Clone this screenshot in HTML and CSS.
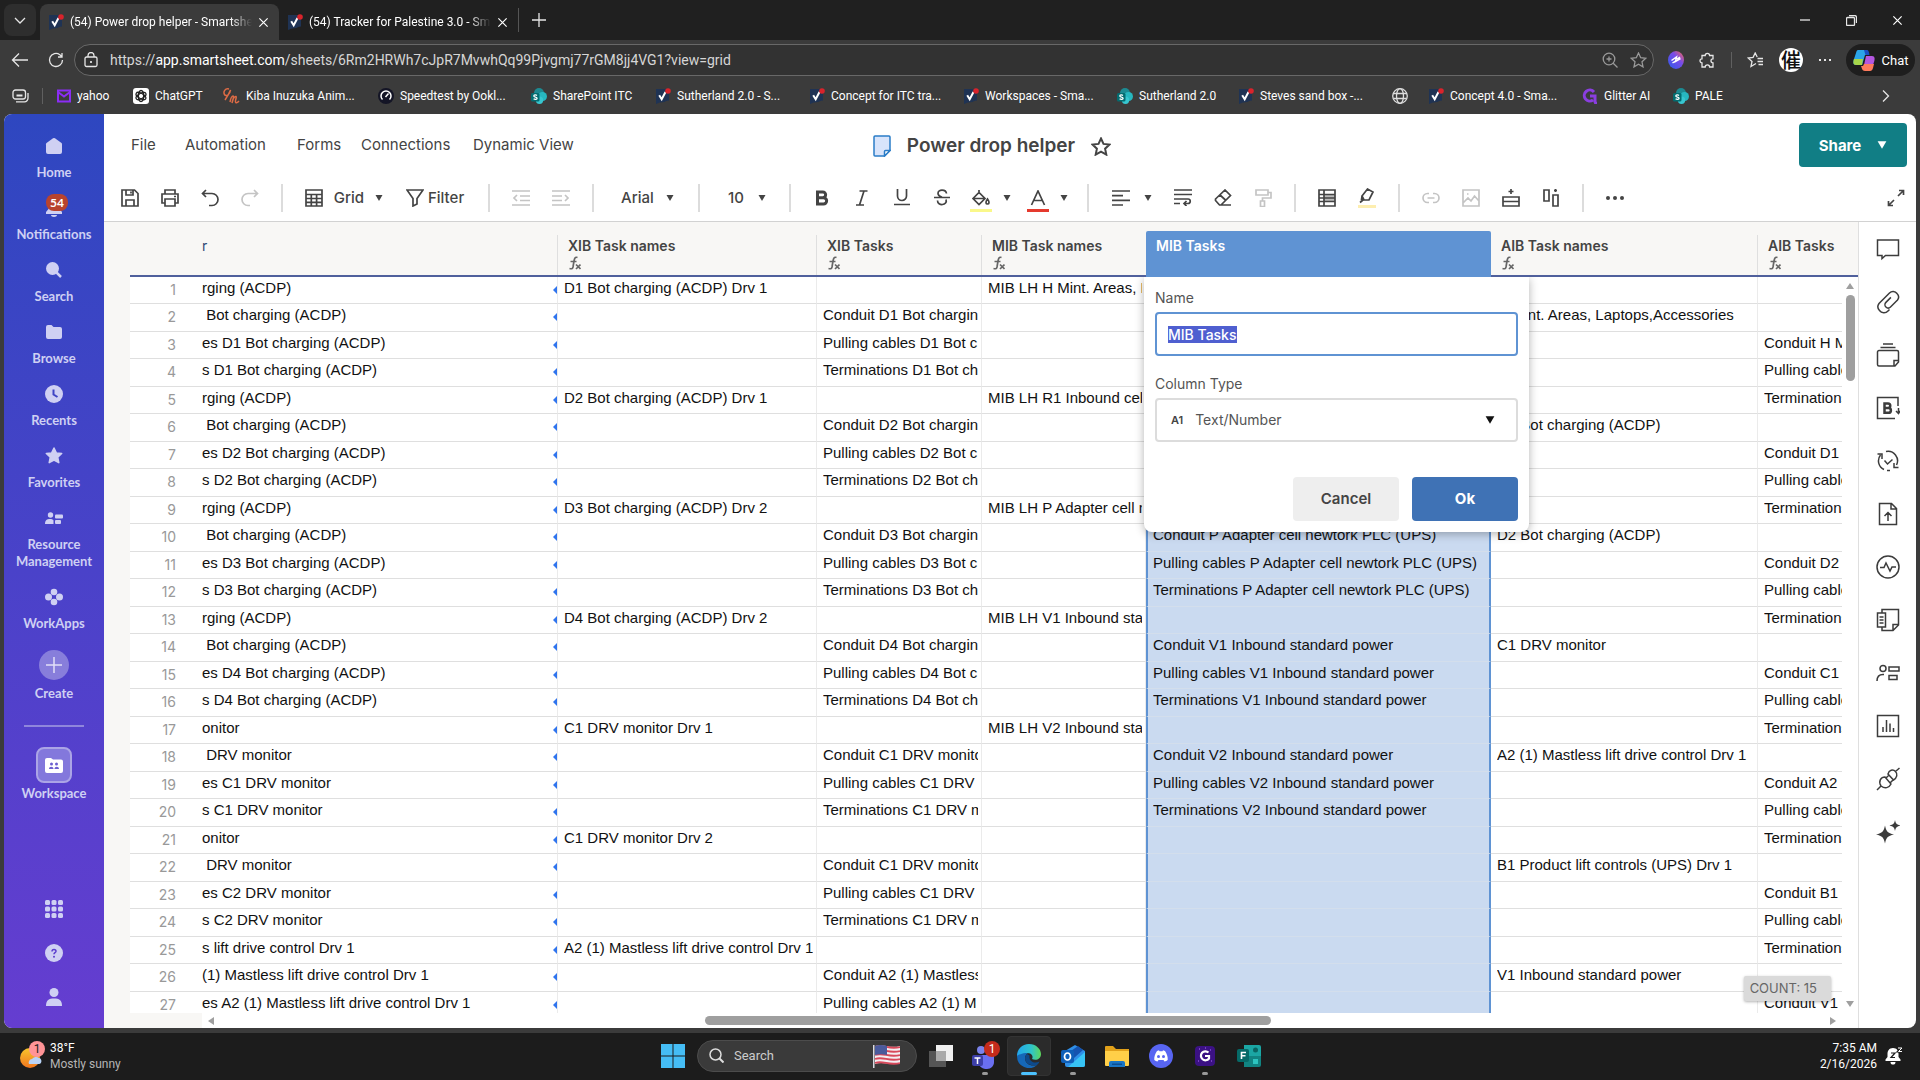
FILE: index.html
```html
<!DOCTYPE html>
<html lang="en">
<head>
    <meta charset="UTF-8">
    <meta name="viewport" content="width=device-width, initial-scale=1.0">
    <title>Power drop helper - Smartsheet</title>
    <link rel="stylesheet" href="styles.css">
</head>
<body>
    <!-- shared symbols -->
    <svg class="symbols" aria-hidden="true">
        <symbol id="smartsheet" viewBox="0 0 16 16">
            <path fill="#1f3354" d="M1 1h13v11.500c-3 .2-3.500 1.500-6.500 1.700C4.500 14.400 3 15 1 16z"/>
            <path fill="none" stroke="#fff" stroke-width="2" d="M4.200 7.200l2.500 4L10.500 4"/>
            <circle cx="13" cy="3" r="2.800" fill="#d9232b"/>
        </symbol>
        <symbol id="sharepoint" viewBox="0 0 16 16">
            <circle cx="8" cy="5" r="5" fill="#1d8a92"/>
            <circle cx="11.500" cy="8.500" r="4.500" fill="#27b7c0"/>
            <circle cx="8.500" cy="12.300" r="3.700" fill="#37c6d0"/>
            <rect y="5" width="8.500" height="8.500" rx="1.500" fill="#036c70"/>
            <path fill="none" stroke="#fff" stroke-width="1.300" d="M6 7.400c-1-.8-3.200-.7-3.200.5 0 1.400 3.300.9 3.300 2.400 0 1.400-2.400 1.400-3.500.5"/>
        </symbol>
        <symbol id="close" viewBox="0 0 12 12">
            <path fill="none" stroke="currentColor" stroke-width="1.300" d="M1.500 1.500l9 9m0-9l-9 9"/>
        </symbol>
        <symbol id="caret" viewBox="0 0 8 6">
            <path fill="currentColor" d="M.5 0h7L4 6z"/>
        </symbol>
        <symbol id="fx" viewBox="0 0 12 14">
            <path fill="none" stroke="#666" stroke-width="1.700" d="M8.500 1.500C6 .5 5.500 2.500 5 5L4 11c-.4 2-1.500 2-3.500 1.500M1.500 5.500h6"/>
            <path fill="none" stroke="#666" stroke-width="1.700" d="M7 8.500l4.500 4.500M11.500 8.500L7 13"/>
        </symbol>
    </svg>

    <header class="browser">
        <div class="tabs">
            <button class="tab-menu" aria-label="Tab actions"><svg width="14" height="14" viewBox="0 0 14 14"><path d="M2 5l5 5 5-5"/></svg></button>
            <div class="tab active">
                <svg width="16" height="16"><use href="#smartsheet"/></svg>
                <span class="tab-title">(54) Power drop helper - Smartshe</span>
                <button aria-label="Close tab"><svg width="11" height="11"><use href="#close"/></svg></button>
            </div>
            <div class="tab">
                <svg width="16" height="16"><use href="#smartsheet"/></svg>
                <span class="tab-title">(54) Tracker for Palestine 3.0 - Sma</span>
                <button aria-label="Close tab"><svg width="11" height="11"><use href="#close"/></svg></button>
            </div>
            <button class="new-tab" aria-label="New tab"><svg width="16" height="16" viewBox="0 0 16 16"><path d="M8 1v14M1 8h14"/></svg></button>
            <div class="window-buttons">
                <button aria-label="Minimize"><svg width="10" height="10" viewBox="0 0 10 10"><path d="M0 5h10"/></svg></button>
                <button aria-label="Restore"><svg width="11" height="11" viewBox="0 0 11 11"><path d="M.5 3.500a1 1 0 0 1 1-1h6a1 1 0 0 1 1 1v6a1 1 0 0 1-1 1h-6a1 1 0 0 1-1-1zM3 .5h5.500a2 2 0 0 1 2 2V8"/></svg></button>
                <button aria-label="Close"><svg width="11" height="11"><use href="#close"/></svg></button>
            </div>
        </div>

        <div class="address-row">
            <button class="nav-button" aria-label="Back"><svg width="18" height="16" viewBox="0 0 18 16"><path d="M17 8H1.500M8 1.500L1.500 8 8 14.500"/></svg></button>
            <button class="nav-button" aria-label="Refresh"><svg width="16" height="16" viewBox="0 0 16 16"><path d="M14.500 8A6.500 6.500 0 1 1 11.800 2.700L14 4.500M14 1v4h-4"/></svg></button>
            <div class="address">
                <svg width="14" height="16" viewBox="0 0 14 16"><rect x="1" y="5" width="12" height="9.500" rx="1.500"/><path d="M4 5V3.500a3 3 0 0 1 6 0V5"/><circle cx="7" cy="10" r="1" fill="#fff" stroke="none"/></svg>
                <span class="url">https://<b>app.smartsheet.com</b>/sheets/6Rm2HRWh7cJpR7MvwhQq99Pjvgmj77rGM8jj4VG1?view=grid</span>
                <svg class="dim" width="16" height="16" viewBox="0 0 16 16"><circle cx="7" cy="7" r="5.800"/><path d="M11.200 11.200L15.500 15.500M7 4.500v5M4.500 7h5"/></svg>
                <svg class="dim" width="17" height="16" viewBox="0 0 17 16"><path d="M8.500 1l2.200 4.700 5.100.6-3.800 3.500 1 5.100-4.500-2.600L4 14.900l1-5.100L1.200 6.300l5.100-.6z"/></svg>
            </div>
            <div class="extensions">
                <svg width="16" height="18" viewBox="0 0 16 18"><defs><linearGradient id="lg1" x1="0" y1="1" x2="1" y2="0"><stop offset="0" stop-color="#2c5be8"/><stop offset=".6" stop-color="#7a4be8"/><stop offset="1" stop-color="#ff6a4d"/></linearGradient></defs><ellipse class="disc" cx="8" cy="9" rx="8" ry="9" fill="url(#lg1)"/><path d="M3.500 9.500l5-3.500-1 4.500 5-3M4.500 12l3-2M9 8l3-2" stroke="#fff" stroke-width="1.500"/></svg>
                <svg width="17" height="17" viewBox="0 0 17 17"><path d="M3 3.500h3.200a2.200 2.200 0 0 1 4.400 0H14v3.300a2 2 0 0 0 0 4V15h-3.400a2.200 2.200 0 0 0-4.400 0H3v-4.200a2 2 0 0 1 0-4z"/></svg>
                <i class="vline"></i>
                <svg width="17" height="16" viewBox="0 0 17 16"><path d="M9 11.500L4 14.500l1-5L1.200 6l4.900-.6L8.200 1l2 4M10.500 6.500H16M10.500 9.500H16M11.500 12.500H16"/></svg>
                <span class="avatar">催</span>
                <svg width="14" height="4" viewBox="0 0 14 4"><path d="M1 2h2M6 2h2M11 2h2" stroke-width="2"/></svg>
            </div>
            <button class="chat">
                <svg width="22" height="21" viewBox="0 0 22 21"><g class="logo"><path fill="#2ba5e8" d="M5 0h8l2 5h-3L9 15H3C0 15 0 12 1 9l2-6C3.500 1 4 0 5 0z"/><path fill="#a6d64a" d="M1 9h9l-1 6H3C0 15 0 12 1 9z"/><path fill="#1a4fc4" d="M11 0h3c1.500 0 2 2 2.500 5h-4z"/><path fill="#b457e0" d="M13 6h6c3 0 3 3 2 6l-1 3h-9z"/><path fill="#ff7a5c" d="M11 14h10l-1 4c-.5 2-1.500 3-3 3h-5c-3 0-3-3-4-5h2z"/></g></svg>
                Chat
            </button>
        </div>

        <nav class="bookmarks">
            <button class="nav-button" aria-label="Workspaces"><svg width="17" height="14" viewBox="0 0 17 14"><rect x="1" y="1" width="12.500" height="9" rx="2.500"/><path d="M4.500 6.500h6" stroke-width="2"/><path d="M4 12.800h8.500a3.500 3.500 0 0 0 3.500-3.500V4"/></svg></button>
            <i class="vline"></i>
            <div class="bookmark-list">
                <a href="#"><svg width="14" height="14" viewBox="0 0 14 14"><path d="M1 1.500h12v11H1zM1 3l6 4.500L13 3" fill="none" stroke="#8b2df5" stroke-width="2"/></svg>yahoo</a>
                <a href="#"><svg width="16" height="16" viewBox="0 0 16 16"><rect width="16" height="16" rx="3" fill="#fff"/><g fill="none" stroke="#222"><ellipse cx="8" cy="8" rx="2.600" ry="5.500"/><ellipse cx="8" cy="8" rx="2.600" ry="5.500" transform="rotate(60 8 8)"/><ellipse cx="8" cy="8" rx="2.600" ry="5.500" transform="rotate(120 8 8)"/></g></svg>ChatGPT</a>
                <a href="#"><svg width="17" height="16" viewBox="0 0 17 16"><path d="M6 1C2 0 0 4 1.500 6.500S7 7 7.500 2C6 6 4 9 2 12M7 14c1-5 2-6 3-6s0 4-1 7c1-5 3-7 4-6.500s-1 4-.5 5.500 2 .5 3.500-1" fill="none" stroke="#dd6b45" stroke-width="1.500"/></svg>Kiba Inuzuka Anim...</a>
                <a href="#"><svg width="16" height="16" viewBox="0 0 16 16"><circle cx="8" cy="8" r="8" fill="#141526"/><path d="M4.500 11.500a5 5 0 1 1 7 0M7.500 9L10.500 5.500" fill="none" stroke="#fff" stroke-width="1.500"/></svg>Speedtest by Ookl...</a>
                <a href="#"><svg width="16" height="16"><use href="#sharepoint"/></svg>SharePoint ITC</a>
                <a href="#"><svg width="16" height="16"><use href="#smartsheet"/></svg>Sutherland 2.0 - S...</a>
                <a href="#"><svg width="16" height="16"><use href="#smartsheet"/></svg>Concept for ITC tra...</a>
                <a href="#"><svg width="16" height="16"><use href="#smartsheet"/></svg>Workspaces - Sma...</a>
                <a href="#"><svg width="16" height="16"><use href="#sharepoint"/></svg>Sutherland 2.0</a>
                <a href="#"><svg width="16" height="16"><use href="#smartsheet"/></svg>Steves sand box -...</a>
                <a href="#" aria-label="Site"><svg width="16" height="16" viewBox="0 0 16 16"><g class="globe"><circle cx="8" cy="8" r="7.300"/><ellipse cx="8" cy="8" rx="3.500" ry="7.300"/><path d="M1.500 5.500h13M1.500 10.500h13"/></g></svg></a>
                <a href="#"><svg width="16" height="16"><use href="#smartsheet"/></svg>Concept 4.0 - Sma...</a>
                <a href="#"><svg width="16" height="16" viewBox="0 0 16 16"><path d="M12 4A5.500 5.500 0 1 0 11 12M8 8h5v5c0 2 1 2.500 2 2.500" fill="none" stroke="#8a3ee0" stroke-width="3"/></svg>Glitter AI</a>
                <a href="#"><svg width="16" height="16"><use href="#sharepoint"/></svg>PALE</a>
            </div>
            <button class="nav-button more" aria-label="More bookmarks"><svg width="8" height="14" viewBox="0 0 8 14"><path d="M1 1.500L6.500 7 1 12.500"/></svg></button>
        </nav>
    </header>

    <div class="app">
        <nav class="sidebar">
            <a href="#"><svg width="18" height="18" viewBox="0 0 18 18"><path d="M8 1.300a2 2 0 0 1 2 0L16.500 6c.4.400.5.700.5 1.200V15a2 2 0 0 1-2 2H3a2 2 0 0 1-2-2V7.200c0-.5.1-.8.5-1.200z"/></svg>Home</a>
            <a href="#" class="notifications"><svg width="18" height="18" viewBox="0 0 18 18"><path d="M9 0c4 0 5.500 3 5.500 6v4l2.500 3v2H1v-2l2.500-3V6C3.500 3 5 0 9 0zM6 16h6c0 1.300-1.300 2-3 2s-3-.7-3-2z"/></svg><span class="badge">54</span>Notifications</a>
            <a href="#"><svg width="18" height="18" viewBox="0 0 18 18"><circle cx="7.500" cy="7.500" r="6.500"/><path d="M11 11l5 5" stroke="#cfd0f3" stroke-width="2.500"/></svg>Search</a>
            <a href="#"><svg width="18" height="18" viewBox="0 0 18 18"><path d="M1 4a2 2 0 0 1 2-2h3.500l2 2H15a2 2 0 0 1 2 2v8a2 2 0 0 1-2 2H3a2 2 0 0 1-2-2z"/></svg>Browse</a>
            <a href="#"><svg width="18" height="18" viewBox="0 0 18 18"><circle cx="9" cy="9" r="9"/><path d="M8.500 4.500v5l4 2.500" fill="none" stroke="#3f44c4" stroke-width="2"/></svg>Recents</a>
            <a href="#"><svg width="18" height="18" viewBox="0 0 18 18"><path stroke="#cfd0f3" stroke-linejoin="round" stroke-width="1.500" d="M9 1l2.300 4.900 5.400.6-4 3.700 1.100 5.500L9 13l-4.800 2.700 1.100-5.500-4-3.700 5.400-.6z"/></svg>Favorites</a>
            <a href="#"><svg width="18" height="18" viewBox="0 0 18 18"><circle cx="5.500" cy="6" r="2.700"/><path d="M0 15c0-4 2-5 5-5 2 0 3 .5 3.500 1.500V15z"/><rect x="10" y="5.500" width="8" height="4" rx="1"/><rect x="10" y="11" width="6" height="4" rx="1"/></svg>Resource<br>Management</a>
            <a href="#"><svg width="18" height="18" viewBox="0 0 18 18"><circle cx="9" cy="4" r="3.300"/><circle cx="9" cy="14" r="3.300"/><circle cx="3.500" cy="9" r="3.500"/><circle cx="14.500" cy="9" r="3.500"/></svg>WorkApps</a>
            <a href="#" class="create"><span class="plus"><svg width="16" height="16" viewBox="0 0 16 16"><path d="M8 0v16M0 8h16" stroke="#e2e0f8" stroke-width="1.500"/></svg></span>Create</a>
            <hr>
            <a href="#" class="workspace"><span class="tile"><svg width="18" height="15" viewBox="0 0 18 15"><path fill="#fff" d="M0 2a2 2 0 0 1 2-2h4l2 1.500h8a2 2 0 0 1 2 2V13a2 2 0 0 1-2 2H2a2 2 0 0 1-2-2z"/><g fill="#6c5fd0"><circle cx="6.500" cy="6" r="1.500"/><circle cx="11.500" cy="6" r="1.500"/><path d="M4 11c0-3 4.500-3 4.500 0zM9.500 11c0-3 4.500-3 4.500 0z"/></g></svg></span>Workspace</a>
            <div class="sidebar-bottom">
                <button aria-label="Apps"><svg width="18" height="18" viewBox="0 0 18 18"><g><rect width="5" height="5" rx="1.500"/><rect x="6.500" width="5" height="5" rx="1.500"/><rect x="13" width="5" height="5" rx="1.500"/><rect y="6.500" width="5" height="5" rx="1.500"/><rect x="6.500" y="6.500" width="5" height="5" rx="1.500"/><rect x="13" y="6.500" width="5" height="5" rx="1.500"/><rect y="13" width="5" height="5" rx="1.500"/><rect x="6.500" y="13" width="5" height="5" rx="1.500"/><rect x="13" y="13" width="5" height="5" rx="1.500"/></g></svg></button>
                <button aria-label="Help"><svg width="18" height="18" viewBox="0 0 18 18"><circle cx="9" cy="9" r="9"/><path d="M7 7.500c0-3 4-2.500 4-.3 0 1.500-2 1.500-2 3" fill="none" stroke="#5c3fce" stroke-width="1.500"/><circle cx="9" cy="12.700" r="1" fill="#5c3fce"/></svg></button>
                <button aria-label="Account"><svg width="18" height="18" viewBox="0 0 18 18"><circle cx="9" cy="4.500" r="4.500"/><path d="M1 18c0-6 3-7.500 8-7.500s8 1.500 8 7.500z"/></svg></button>
            </div>
        </nav>

        <main class="main">
            <div class="title-bar">
                <div class="menu">
                    <button>File</button>
                    <button>Automation</button>
                    <button>Forms</button>
                    <button>Connections</button>
                    <button>Dynamic View</button>
                </div>
                <div class="sheet-title">
                    <svg width="18" height="22" viewBox="0 0 18 22"><path d="M2 1h14a1 1 0 0 1 1 1v13.500L11.500 21H2a1 1 0 0 1-1-1V2a1 1 0 0 1 1-1z" fill="#d8e4fb" stroke="#2a7cc7" stroke-width="1.500"/><path d="M17 15.500h-4.500a1 1 0 0 0-1 1V21z" fill="#fff" stroke="#2a7cc7" stroke-width="1.500"/></svg>
                    <h1>Power drop helper</h1>
                    <button aria-label="Add to favorites"><svg width="20" height="19" viewBox="0 0 20 19"><path d="M10 1.500l2.500 5.400 6 .7-4.400 4.100 1.200 5.900L10 14.600l-5.300 3 1.200-5.900L1.500 7.600l6-.7z" fill="none" stroke="#444" stroke-width="2"/></svg></button>
                </div>
                <button class="share">Share <svg width="10" height="8"><use href="#caret"/></svg></button>
            </div>

            <div class="toolbar">
                <button aria-label="Save"><svg width="18" height="18" viewBox="0 0 18 18"><path d="M1 1h12.500L17 4.500V17H1zM5 1v5h7V1M5 17v-6h8v6M10 2.500v2"/></svg></button>
                <button aria-label="Print"><svg width="18" height="18" viewBox="0 0 18 18"><path d="M4 5V1h10v4M4 14H1V5h16v9h-3M4 10h10v7H4zM13 7.500h2"/></svg></button>
                <button aria-label="Undo"><svg width="18" height="18" viewBox="0 0 18 18"><path d="M5 1L1.500 4.500 5 8M1.500 4.500H11a6 6 0 0 1 0 12H8"/></svg></button>
                <button aria-label="Redo" class="off"><svg width="18" height="18" viewBox="0 0 18 18"><path d="M13 1l3.500 3.500L13 8M16.500 4.500H7a6 6 0 0 0 0 12h2"/></svg></button>
                <i class="sep"></i>
                <button class="view"><svg width="18" height="18" viewBox="0 0 18 18"><path d="M1 1h16v16H1zM1 5.500h16M1 9.500h16M1 13.300h16M6.300 5.500V17M11.600 5.500V17"/></svg>Grid<svg class="caret" width="8" height="6"><use href="#caret"/></svg></button>
                <button class="filter"><svg width="18" height="18" viewBox="0 0 18 18"><path d="M1 1h16l-6 8.500V15l-4 2V9.500z"/></svg>Filter</button>
                <i class="sep"></i>
                <button aria-label="Outdent" class="off"><svg width="18" height="16" viewBox="0 0 18 16"><path d="M0 1h18M0 15h18M8 6h10M8 10.500h10M5 5L2 8l3 3"/></svg></button>
                <button aria-label="Indent" class="off"><svg width="18" height="16" viewBox="0 0 18 16"><path d="M0 1h18M0 15h18M0 6h10M0 10.500h10M13 5l3 3-3 3"/></svg></button>
                <i class="sep"></i>
                <button class="font">Arial<svg class="caret" width="8" height="6"><use href="#caret"/></svg></button>
                <i class="sep"></i>
                <button class="size">10<svg class="caret" width="8" height="6"><use href="#caret"/></svg></button>
                <i class="sep"></i>
                <button aria-label="Bold"><svg width="14" height="16" viewBox="0 0 14 16"><path class="heavy" d="M2.500 2h5.300a2.800 2.800 0 0 1 0 5.700H2.500zM2.500 7.700h6a3.100 3.100 0 0 1 0 6.300h-6z"/></svg></button>
                <button aria-label="Italic"><svg width="14" height="16" viewBox="0 0 14 16"><path d="M4.500 1h8M1 15h8M9 1L4.500 15"/></svg></button>
                <button aria-label="Underline"><svg width="16" height="17" viewBox="0 0 16 17"><path d="M3.500 0v7a4.500 4.500 0 0 0 9 0V0M0 15.500h16"/></svg></button>
                <button aria-label="Strikethrough"><svg width="16" height="17" viewBox="0 0 16 17"><path d="M12.500 4.500C12 0 4 0 4 4.200 4 7 6 7.500 8 8.200M0 8.500h16M12 10.500c2 6-8.500 7-8.500 1"/></svg></button>
                <button class="color" aria-label="Fill color"><svg width="22" height="22" viewBox="0 0 22 22"><path d="M3 8.500l6-6 6 6-6 6zM3 8.500h12M9 2.500V0M17.500 9c2.500 3.500 1.500 5 0 5s-2.500-1.500 0-5z"/><path d="M0 20.500h22" class="swatch-fill"/></svg><svg class="caret" width="8" height="6"><use href="#caret"/></svg></button>
                <button class="color" aria-label="Text color"><svg width="22" height="22" viewBox="0 0 22 22"><path d="M4.500 15L11 1l6.500 14M7 10.500h8"/><path d="M0 20.500h22" class="swatch-text"/></svg><svg class="caret" width="8" height="6"><use href="#caret"/></svg></button>
                <i class="sep"></i>
                <button class="align" aria-label="Align"><svg width="18" height="16" viewBox="0 0 18 16"><path d="M0 1h18M0 5.700h11M0 10.300h18M0 15h11"/></svg><svg class="caret" width="8" height="6"><use href="#caret"/></svg></button>
                <button aria-label="Wrap text"><svg width="18" height="17" viewBox="0 0 18 17"><path d="M0 1h18M0 5.500h18M0 10h14a2.200 2.200 0 0 1 0 4.500h-4M0 14.500h6M12.500 12L10 14.500l2.500 2.500"/></svg></button>
                <button aria-label="Clear format"><svg width="18" height="17" viewBox="0 0 18 17"><path d="M1.500 10L11 1l5.500 5.500L7 16H5.500l-4-4.500zM6 6l6 5.500M6 16h11"/></svg></button>
                <button aria-label="Format painter" class="off"><svg width="18" height="18" viewBox="0 0 18 18"><path d="M2 1h12v5H2zM14 3.500h3V9H8.500v3M6.500 12h4v5.500h-4z"/></svg></button>
                <i class="sep"></i>
                <button aria-label="Conditional formatting"><svg width="18" height="18" viewBox="0 0 18 18"><path d="M6 5.500h11v7H6z" fill="#bbb" stroke="none"/><path d="M1 1h16v16H1zM1 5.500h16M1 9h16M1 12.500h16M6 1v16"/></svg></button>
                <button aria-label="Highlight changes"><svg width="18" height="20" viewBox="0 0 18 20"><path d="M4 8l5.500-7L15 4l-4 8H6zM4 8l-.5 3.500L6 12M2 14.500l3-2.500"/><path d="M0 18.500h18" class="swatch-mark"/></svg></button>
                <i class="sep"></i>
                <button aria-label="Link" class="off"><svg width="18" height="12" viewBox="0 0 18 12"><path d="M7 1.500H5.500a4.500 4.500 0 0 0 0 9H7M11 1.500h1.500a4.500 4.500 0 0 1 0 9H11M5.500 6h7"/></svg></button>
                <button aria-label="Image" class="off"><svg width="18" height="18" viewBox="0 0 18 18"><path d="M1 1h16v16H1zM1.500 13.500L6 9l3 3 3.500-5 4.500 5M5 5h1.500"/></svg></button>
                <button aria-label="Insert row"><svg width="18" height="18" viewBox="0 0 18 18"><path d="M1 8h16v9H1zM1 12.500h16M9 0v5M6.500 2.500h5"/></svg></button>
                <button aria-label="Insert column"><svg width="18" height="18" viewBox="0 0 18 18"><path d="M2 1h5v11H2zM11 6h5v11h-5zM13.500 0v3M12 1.500h3"/></svg></button>
                <i class="sep"></i>
                <button aria-label="More"><svg width="18" height="4" viewBox="0 0 18 4"><g fill="#444" stroke="none"><circle cx="2" cy="2" r="2"/><circle cx="9" cy="2" r="2"/><circle cx="16" cy="2" r="2"/></g></svg></button>
                <button class="expand" aria-label="Full screen"><svg width="18" height="18" viewBox="0 0 18 18"><path d="M11 7l5.500-5.500M12 1.500h4.500V6M7 11l-5.500 5.500M1.500 12v4.500H6"/></svg></button>
            </div>

            <div class="content">
                <section class="sheet">
                    <div class="grid-area">
                        <div class="grid-wrap">
                            <table class="grid">
                                <colgroup>
                                    <col class="c-num"><col class="c-task"><col class="c-xib-names"><col class="c-xib"><col class="c-mib-names"><col class="c-mib"><col class="c-aib-names"><col>
                                </colgroup>
                                <thead>
                                    <tr>
                                        <th aria-label="Row"></th>
                                        <th class="primary"><div class="head">r</div></th>
                                        <th><div class="head">XIB Task names<svg width="12" height="14"><use href="#fx"/></svg></div></th>
                                        <th><div class="head">XIB Tasks<svg width="12" height="14"><use href="#fx"/></svg></div></th>
                                        <th><div class="head last">MIB Task names<svg width="12" height="14"><use href="#fx"/></svg></div></th>
                                        <th class="selected">
                                            <div class="head">MIB Tasks</div>
                                            <form class="column-dialog" id="columnDialog">
                                                <label for="columnName">Name</label>
                                                <input type="text" id="columnName" value="MIB Tasks">
                                                <label for="columnType">Column Type</label>
                                                <div class="type-field">
                                                    <span class="type-icon" aria-hidden="true">A1</span>
                                                    <select id="columnType"><option>Text/Number</option></select>
                                                    <svg width="10" height="8"><use href="#caret"/></svg>
                                                </div>
                                                <div class="actions">
                                                    <button type="button" class="cancel">Cancel</button>
                                                    <button type="submit" class="ok">Ok</button>
                                                </div>
                                            </form>
                                        </th>
                                        <th><div class="head">AIB Task names<svg width="12" height="14"><use href="#fx"/></svg></div></th>
                                        <th><div class="head last">AIB Tasks<svg width="12" height="14"><use href="#fx"/></svg></div></th>
                                    </tr>
                                </thead>
                                <tbody id="gridBody"></tbody>
                            </table>
                        </div>
                        <div class="vscroll">
                            <div class="vscroll-head"></div>
                            <i class="arrow up"></i>
                            <i class="thumb"></i>
                            <i class="arrow down"></i>
                        </div>
                        <div class="count">COUNT: 15</div>
                    </div>
                    <div class="hscroll">
                        <i class="arrow left"></i>
                        <div class="track"><i class="thumb"></i></div>
                        <i class="arrow right"></i>
                    </div>
                </section>

                <aside class="rail">
                    <button aria-label="Conversations"><svg width="24" height="24" viewBox="0 0 24 24"><path d="M1.500 3h21v15.500H9.500L6 21.500v-3H1.500z"/></svg></button>
                    <button aria-label="Attachments"><svg width="24" height="24" viewBox="0 0 24 24"><path d="M13.500 19.500L12 21a5.500 5.500 0 0 1-8.500-.5 5.500 5.500 0 0 1-.5-7L13.500 3a5 5 0 0 1 7.500.5 5 5 0 0 1 .5 6.500l-7 7a3.200 3.200 0 0 1-4.600-4.600l5-5"/></svg></button>
                    <button aria-label="Proofs"><svg width="24" height="24" viewBox="0 0 24 24"><path d="M3 7.500h18a1.500 1.500 0 0 1 1.500 1.500v10L19 23H3a1.500 1.500 0 0 1-1.500-1.500V9A1.500 1.500 0 0 1 3 7.500zM22.500 17.500H18V23M4.500 4.500h15M7 1h10"/></svg></button>
                    <button aria-label="Brandfolder"><svg width="24" height="24" viewBox="0 0 24 24"><path d="M22 10V1.500H1.500v21H19M22.500 12v4M20 15l2.500 2.500L24 15"/><path d="M8.500 7.500h3.500a2 2 0 0 1 0 4.500H8.500zM8.500 12h4a2.400 2.400 0 0 1 0 4.800h-4z" stroke-width="2.500"/></svg></button>
                    <button aria-label="Update requests"><svg width="24" height="24" viewBox="0 0 24 24"><path d="M8 20.500A9.500 9.500 0 0 1 4.500 6M1.500 5h4.500v5M10 2.500A9.500 9.500 0 0 1 20.500 16M22.500 18.500H18V14M11 21.500h3M8.500 11.500l3 3.500 5-4.500"/></svg></button>
                    <button aria-label="Publish"><svg width="24" height="24" viewBox="0 0 24 24"><path d="M3.500 1.500h12l5 5v16h-17v-21zM15 1.500V7h5.500M12 19v-8M8.500 14L12 10.500l3.500 3.500"/></svg></button>
                    <button aria-label="Activity log"><svg width="24" height="24" viewBox="0 0 24 24"><circle cx="12" cy="12" r="11"/><path d="M4 12.500h4l2-4.500 4 8 2-4h4"/></svg></button>
                    <button aria-label="Summary"><svg width="24" height="24" viewBox="0 0 24 24"><path d="M1.500 5h8v14h-8zM6 5V1.500h16.500v15.500L17 22.500H6V19M22.500 16.500H17v6M3.500 9h4M3.500 12h4M3.500 15h4"/></svg></button>
                    <button aria-label="Resources"><svg width="24" height="24" viewBox="0 0 24 24"><circle cx="7" cy="7.500" r="3"/><path d="M1 20c0-5 2.500-6.500 6-6.500h1M13 6h10v4H13zM13 14.500h8v4h-8z"/></svg></button>
                    <button aria-label="Charts"><svg width="24" height="24" viewBox="0 0 24 24"><path d="M1.500 1.500h21v21h-21zM7 18v-5M10.500 18V6M14 18V9.500M17.500 18v-4"/></svg></button>
                    <button aria-label="Connectors"><svg width="24" height="24" viewBox="0 0 24 24"><path d="M1 23l4-4M5 19c-3-5 0-9 4-9l6 7c-2 4-6 5-10 2zM19.500 4.500L23.500 1M12 7c1-4 5-5 7.500-2.500S21 11 17.500 13zM10 11l3-3M14 16l3-3"/></svg></button>
                    <button aria-label="AI"><svg width="24" height="24" viewBox="0 0 24 24"><path fill="#3c3c3c" stroke="none" d="M9 5.500c1.300 6 2.500 7.500 9 9-6.500 1.500-7.700 3-9 9-1.300-6-2.500-7.500-9-9 6.500-1.500 7.700-3 9-9zM19 0c.7 3.500 1.500 4.500 5.500 5.500-4 1-4.800 2-5.500 5.500-.7-3.500-1.500-4.500-5.500-5.500 4-1 4.800-2 5.500-5.500z"/></svg></button>
                </aside>
            </div>
        </main>
    </div>

    <footer class="taskbar">
        <div class="weather">
            <svg width="30" height="32" viewBox="0 0 30 32"><defs><linearGradient id="lg2" x1="0" y1="0" x2="0" y2="1"><stop offset="0" stop-color="#f9c52c"/><stop offset="1" stop-color="#f0761f"/></linearGradient></defs><circle cx="13" cy="18" r="10" fill="url(#lg2)"/><path fill="#b9d3f7" d="M12 24a3.500 3.500 0 0 1 3-5 5 5 0 0 1 7-1c3 0 3.500 6 0 6z"/><circle cx="20" cy="9" r="8" fill="#ff9497"/><text x="20" y="13" text-anchor="middle" font-size="12" fill="#222">1</text></svg>
            <div><div>38°F</div><div class="muted">Mostly sunny</div></div>
        </div>
        <div class="task-icons">
            <button aria-label="Start"><svg width="24" height="24" viewBox="0 0 24 24"><path fill="#45bdf5" d="M0 0h11.500v11.500H0zM12.500 0H24v11.500H12.500zM0 12.500h11.500V24H0zM12.500 12.500H24V24H12.500z"/></svg></button>
            <label class="task-search">
                <svg width="15" height="15" viewBox="0 0 15 15"><circle cx="6.500" cy="6.500" r="5.500" fill="none" stroke="#ddd" stroke-width="1.500"/><path d="M10.500 10.500l4 4" stroke="#ddd" stroke-width="2"/></svg>
                <input type="text" placeholder="Search" aria-label="Search">
                <svg width="27" height="24" viewBox="0 0 27 24"><path fill="#d9dbe2" d="M0 1h1.500v23H0z"/><path fill="#f3eef2" d="M2 2c8-3 14 3 25 0v17c-10 3-16-2-25 1z"/><path fill="none" stroke="#d8485a" stroke-width="1.800" d="M2 3c8-3 14 3 25 0M2 7c8-3 14 3 25 0M2 11c8-3 14 3 25 0M2 15c8-3 14 3 25 0M2 19c8-3 14 3 25 0"/><path fill="#4a5a9c" d="M2 2c4-1.500 8-1 12 0v9c-4-1-8-1-12 0z"/></svg>
            </label>
            <button aria-label="Task view"><svg width="24" height="22" viewBox="0 0 24 22"><path fill="#555" d="M0 6h17v16H0z"/><path fill="#f0f0f0" d="M7 0h17v16H7z"/><path fill="#aaa" d="M7 6h10v10H7z"/></svg></button>
            <button aria-label="Teams" class="open"><svg width="30" height="30" viewBox="0 0 30 30"><circle cx="11" cy="9" r="4" fill="#7b83eb"/><path fill="#6a6ff0" d="M9 14h15v7c0 4-3 7-7 7s-8-2-8-6z"/><rect x="2" y="14" width="11" height="11" rx="2" fill="#3d3fa8"/><path d="M4.500 17h6M7.500 17v6" stroke="#fff" stroke-width="1.500"/><circle cx="22" cy="8" r="8" fill="#c42b1c"/><text x="22" y="12" text-anchor="middle" font-size="12" fill="#fff">1</text></svg></button>
            <button aria-label="Edge" class="open current"><svg width="24" height="24" viewBox="0 0 24 24"><defs><linearGradient id="lg3"><stop offset="0" stop-color="#22a6ee"/><stop offset=".6" stop-color="#2fc4c9"/><stop offset="1" stop-color="#5ed85a"/></linearGradient></defs><path fill="#1568b8" d="M0 12a12 12 0 0 0 20 9c-6 2-12-1-12-7 0-2 1-4 3-5-6-2-11 0-11 3z"/><path fill="url(#lg3)" d="M0 12C0 5 5 0 12 0s12 5 12 10-5 7-9 5c1-1 1.500-6-5-6C5 9 1 11 0 12z"/><path fill="#0d4a8c" d="M10 10c-5 5 0 13 10 11 1-1 2-2 2.500-3.500-6 3-11-1-10-6z"/></svg></button>
            <button aria-label="Outlook" class="open"><svg width="24" height="24" viewBox="0 0 24 24"><path fill="#2f8fe8" d="M4 7l10-6 10 6v14a2 2 0 0 1-2 2H6a2 2 0 0 1-2-2z"/><path fill="#1553b0" d="M10 7l7-5 5 4-9 8z"/><path fill="#37c4f5" d="M24 8v13a2 2 0 0 1-2 2H7z"/><rect y="6" width="13" height="13" rx="2" fill="#0f5fb8"/><ellipse cx="6.500" cy="12.500" rx="3" ry="3.500" fill="none" stroke="#fff" stroke-width="1.700"/></svg></button>
            <button aria-label="File Explorer"><svg width="24" height="22" viewBox="0 0 24 22"><path fill="#e2a11a" d="M0 2a1 1 0 0 1 1-1h7l3 3H24v4H0z"/><path fill="#ffcf48" d="M0 6h24v14a1 1 0 0 1-1 1H1a1 1 0 0 1-1-1z"/><path fill="#1975c5" d="M4 22v-4a2 2 0 0 1 2-2h12a2 2 0 0 1 2 2v4z"/><path fill="#0b4f93" d="M7 18.500h10V20H7z"/></svg></button>
            <button aria-label="Discord"><svg width="24" height="24" viewBox="0 0 24 24"><circle cx="12" cy="12" r="12" fill="#5865f2"/><path fill="#fff" d="M8 7l2-.7.5 1h3l.5-1L16 7c2 3 3 6 2.700 9-1 .8-2 1.300-3.200 1.500l-1-1.500h-5l-1 1.500C7.300 17.300 6.300 16.800 5.300 16 5 13 6 10 8 7z"/><circle cx="9.500" cy="12.500" r="1.500" fill="#5865f2"/><circle cx="14.500" cy="12.500" r="1.500" fill="#5865f2"/></svg></button>
            <button aria-label="Glitter" class="open"><svg width="20" height="20" viewBox="0 0 20 20"><rect width="20" height="20" rx="4" fill="#3b1184"/><path d="M13.500 6.500A4.500 4.500 0 1 0 14 12.500V10h-4" fill="none" stroke="#fff" stroke-width="2.200"/><path d="M4 3h1M15 4h1M3 15h1M16 15h1M10 2h1" stroke="#b06aff"/></svg></button>
            <button aria-label="Forms"><svg width="24" height="22" viewBox="0 0 24 22"><path fill="#1ba6a4" d="M7 0h15a2 2 0 0 1 2 2v9H7z"/><path fill="#118482" d="M7 11h17v9a2 2 0 0 1-2 2H7z"/><circle cx="18.500" cy="5" r="2.500" fill="#0a6563"/><path fill="#2dc5c0" d="M16 14h5v5h-5z"/><rect y="4" width="12" height="13" rx="2" fill="#066a68"/><path d="M4.500 14V7.500h4.500M4.500 10.800h4" fill="none" stroke="#fff" stroke-width="1.600"/></svg></button>
        </div>
        <div class="tray">
            <div class="clock">7:35 AM<br>2/16/2026</div>
            <svg width="18" height="18" viewBox="0 0 18 18"><path fill="#fff" d="M8 1c4 0 5.500 3 5.500 6v3l2 2.500V14h-15v-1.500L2.500 10V7c0-3 1.500-6 5.500-6zM5.500 15h5c0 2-1 2.500-2.500 2.500S5.500 17 5.500 15z"/><path d="M12 1h4l-4 4h4.500M6 6h4l-4 4.500h4" fill="none" stroke="#1c1c1c" stroke-width="1.200"/><path d="M13 1h4l-3.500 3.500H17" fill="none" stroke="#fff"/></svg>
        </div>
    </footer>

    <script src="grid.js"></script>
</body>
</html>
```
FILE: styles.css
```css
:root {
    --chrome-dark: #202020;
    --chrome: #3b3b3b;
    --text: #444;
    --line: #dfdfdf;
    --accent: #5f93d3;
    --header-line: #50609c;
    --sheet-bg: #f8f7f5;
    --ui-font: Inter, "Open Sans", sans-serif;
    --os-font: Roboto, "Open Sans", sans-serif;
}

* {
    box-sizing: border-box;
}

body {
    margin: 0;
    height: 100vh;
    display: flex;
    flex-direction: column;
    overflow: hidden;
    background: var(--chrome);
    font-family: var(--ui-font);
    color: var(--text);
}

button, input, select {
    font: inherit;
    color: inherit;
}

button {
    padding: 0;
    border: 0;
    background: none;
    display: flex;
    align-items: center;
    justify-content: center;
    cursor: pointer;
}

a {
    color: inherit;
    text-decoration: none;
}

svg {
    flex: none;
}

.symbols {
    display: none;
}

/* ---------- browser ---------- */
.browser {
    flex: none;
    color: #fff;
    font-family: var(--os-font);
    font-size: 12px;
}

.browser svg {
    fill: none;
    stroke: #e6e6e6;
    stroke-width: 1.3;
}

.browser use, .browser .logo, .browser .disc, .browser .bookmark-list svg {
    stroke: none;
}

.browser .globe {
    stroke: #ddd;
}

.tabs {
    display: flex;
    height: 40px;
    padding: 4px 0 0 4px;
    background: var(--chrome-dark);
}

.tab-menu {
    width: 32px;
    height: 32px;
    margin-right: 4px;
    border-radius: 8px;
    background: #2e2e2e;
}

.tab {
    display: flex;
    align-items: center;
    width: 239px;
    padding: 0 10px 0 8px;
    gap: 6px;
    border-radius: 8px 8px 0 0;
}

.tab.active {
    background: var(--chrome);
}

.tab-title {
    flex: 1;
    overflow: hidden;
    white-space: nowrap;
    mask-image: linear-gradient(to right, #000 88%, transparent);
}

.new-tab {
    width: 40px;
    height: 24px;
    margin-top: 4px;
    border-left: 1px solid #555;
}

.window-buttons {
    display: flex;
    height: 32px;
    margin-left: auto;
}

.window-buttons button {
    width: 46px;
}

.address-row {
    display: flex;
    align-items: center;
    height: 40px;
    padding: 0 5px 0 2px;
}

.nav-button {
    width: 36px;
    height: 32px;
}

.address {
    flex: 1;
    display: flex;
    align-items: center;
    gap: 12px;
    height: 32px;
    padding: 0 6px 0 9px;
    border: 1px solid #686868;
    border-radius: 16px;
    background: #323232;
}

.browser .dim {
    stroke: #999;
}

.url {
    flex: 1;
    font-size: 14px;
    color: #d6d6d6;
}

.url b {
    font-weight: 400;
    color: #fff;
}

.extensions {
    display: flex;
    align-items: center;
    gap: 15px;
    padding: 0 14px;
}

.vline {
    width: 1px;
    height: 16px;
    background: #606060;
}

.avatar {
    width: 24px;
    height: 24px;
    border-radius: 50%;
    background: #fff;
    color: #111;
    text-align: center;
    font: 500 20px/24px "Noto Sans CJK SC", sans-serif;
}

.chat {
    gap: 7px;
    width: 69px;
    height: 32px;
    border-radius: 16px;
    background: #1e1e1e;
    font-size: 13px;
}

.bookmarks {
    display: flex;
    align-items: center;
    height: 34px;
    padding: 0 16px 2px 2px;
}

.bookmarks .vline {
    margin: 0 14px 0 4px;
}

.bookmark-list {
    flex: 1;
    display: grid;
    grid-template-columns: 76px 90px 155px 153px 124px 154px 154px 154px 121px 154px 36px 154px 91px auto;
    white-space: nowrap;
}

.bookmark-list a {
    display: flex;
    align-items: center;
    gap: 6px;
}

/* ---------- app ---------- */
.app {
    flex: 1;
    display: flex;
    min-height: 0;
    margin: 0 4px 5px;
    border-radius: 8px;
    overflow: hidden;
    background: #fff;
}

.sidebar {
    flex: none;
    display: flex;
    flex-direction: column;
    width: 100px;
    padding-top: 23px;
    background: linear-gradient(#2e47c0, #4a42c9 50%, #653dd0);
    color: #cfd0f3;
    font: 700 13px/17px Lato, "Open Sans", sans-serif;
    text-align: center;
}

.sidebar svg {
    fill: #cfd0f3;
}

.sidebar a {
    display: block;
    margin-bottom: 18px;
    position: relative;
}

.sidebar a > svg {
    display: block;
    margin: 0 auto 9px;
}

.badge {
    position: absolute;
    top: -5px;
    left: 42px;
    width: 22px;
    height: 17px;
    border-radius: 8px;
    background: #b8432f;
    color: #fff;
    font-size: 12px;
}

.plus {
    display: grid;
    place-items: center;
    width: 30px;
    height: 30px;
    margin: 0 auto 5px;
    border-radius: 50%;
    background: rgba(255, 255, 255, .32);
}

.sidebar hr {
    width: 60px;
    height: 2px;
    margin: 5px auto 20px;
    border: 0;
    background: #8f86dc;
}

.tile {
    display: grid;
    place-items: center;
    width: 36px;
    height: 36px;
    margin: 0 auto 2px;
    border: 2px solid #aba4e6;
    border-radius: 8px;
    background: #8378dc;
}

.sidebar-bottom {
    display: flex;
    flex-direction: column;
    align-items: center;
    gap: 26px;
    margin: auto 0 22px;
}

.main {
    flex: 1;
    display: flex;
    flex-direction: column;
    min-width: 0;
}

.title-bar {
    display: grid;
    grid-template-columns: 1fr auto 1fr;
    align-items: center;
    height: 62px;
    padding: 0 9px 0 27px;
}

.menu {
    display: grid;
    grid-template-columns: 54px 112px 64px 112px auto;
    justify-content: start;
    font-size: 15px;
    line-height: 20px;
}

.menu button {
    justify-content: start;
}

.sheet-title {
    display: flex;
    align-items: center;
    gap: 16px;
    padding: 2px 54px 0 0;
}

h1 {
    margin: 0;
    font-size: 19px;
    line-height: 24px;
    font-weight: 600;
}

.share {
    justify-self: end;
    gap: 16px;
    width: 108px;
    height: 44px;
    border-radius: 4px;
    background: #117e85;
    color: #fff;
    font-size: 15px;
    font-weight: 700;
}

.toolbar {
    display: flex;
    align-items: center;
    height: 46px;
    padding: 0 0 2px 6px;
    border-bottom: 1px solid #d2d2d2;
    font-size: 15px;
    font-weight: 500;
}

.toolbar button {
    flex: none;
    width: 40px;
    height: 32px;
}

.toolbar svg {
    fill: none;
    stroke: #444;
    stroke-width: 1.7;
}

.toolbar .off svg {
    stroke: #c4c4c4;
}

.toolbar .caret {
    stroke: none;
}

.heavy {
    stroke-width: 3;
}

.swatch-fill {
    stroke: #faf88a;
    stroke-width: 3;
}

.swatch-text {
    stroke: #e53a2e;
    stroke-width: 3;
}

.swatch-mark {
    stroke: #fdeeb0;
    stroke-width: 3;
}

.sep {
    flex: none;
    width: 2px;
    height: 28px;
    margin: 0 11px;
    background: #dcdcdc;
}

.toolbar .view {
    width: 100px;
    gap: 11px;
}

.toolbar .filter {
    width: 83px;
    gap: 4px;
    justify-content: start;
    padding-left: 12px;
}

.toolbar .font {
    width: 82px;
    gap: 12px;
    justify-content: start;
    padding-left: 16px;
}

.toolbar .size {
    width: 67px;
    gap: 14px;
    justify-content: start;
    padding-left: 17px;
}

.toolbar .color {
    width: 57px;
    gap: 11px;
}

.toolbar .color svg:first-child {
    margin-top: 6px;
}

.toolbar .align {
    width: 63px;
    gap: 14px;
}

.toolbar .expand {
    margin-left: auto;
}

.content {
    flex: 1;
    display: flex;
    min-height: 0;
}

/* ---------- sheet ---------- */
.sheet {
    flex: 1;
    display: flex;
    flex-direction: column;
    min-width: 0;
    background: var(--sheet-bg);
}

.grid-area {
    flex: 1;
    display: flex;
    min-height: 0;
    padding-left: 26px;
    position: relative;
}

.grid-wrap {
    flex: 1;
    min-width: 0;
    overflow: hidden;
}

.grid {
    width: 100%;
    table-layout: fixed;
    border-collapse: separate;
    border-spacing: 0;
}

.c-num { width: 72px; }
.c-task { width: 356px; }
.c-xib-names { width: 259px; }
.c-xib { width: 165px; }
.c-mib-names { width: 164px; }
.c-mib { width: 345px; }
.c-aib-names { width: 267px; }

th {
    height: 55px;
    padding: 0;
    border-bottom: 2px solid var(--header-line);
    vertical-align: bottom;
    text-align: left;
    font-size: 14px;
    line-height: 20px;
    font-weight: 600;
    white-space: nowrap;
}

.head {
    height: 40px;
    padding: 1px 0 0 10px;
    border-right: 1px solid var(--line);
}

.head svg {
    display: block;
    margin-left: 1px;
}

.primary .head {
    padding-left: 0;
    font-weight: 400;
    color: #2f4a75;
}

.head.last {
    border-right: 0;
}

th.selected {
    position: relative;
    border-bottom-color: var(--accent);
}

.selected .head {
    height: 44px;
    padding-top: 5px;
    border: 0;
    border-radius: 2px 2px 0 0;
    background: var(--accent);
    color: #fff;
}

td {
    height: 27px;
    padding: 0;
    border-right: 1px solid #ebebeb;
    border-bottom: 1px solid var(--line);
    background: #fff;
    vertical-align: top;
    font: 15px/22px "Liberation Sans", Arial, sans-serif;
    color: #111;
}

tr:nth-child(even) td {
    height: 28px;
}

td:last-child {
    border-right: 0;
}

td span {
    display: block;
    margin: 0 3px 0 6px;
    overflow: hidden;
    white-space: pre;
}

td:last-child span {
    margin-right: 0;
}

tr td.num {
    padding-right: 26px;
    border-right: 0;
    text-align: right;
    font: 14px/26px var(--ui-font);
    color: #999;
}

/* the column is scrolled under the frozen row numbers */
td.task {
    position: relative;
}

td.task span {
    margin-left: 0;
}

td.task::after {
    content: "";
    position: absolute;
    top: 9px;
    right: 0;
    border: 4px solid transparent;
    border-right-color: #2f74ee;
    border-left: 0;
}

td.picked {
    border-right: 2px solid var(--accent);
    border-left: 2px solid var(--accent);
    border-bottom-color: #d3deec;
    background: #cadaf0;
}

td.picked span {
    margin: 0 5px;
}

.vscroll {
    flex: none;
    display: flex;
    flex-direction: column;
    align-items: center;
    width: 16px;
    background: #fff;
}

.vscroll-head {
    width: 100%;
    height: 55px;
    border-bottom: 2px solid var(--header-line);
    background: var(--sheet-bg);
}

.thumb {
    display: block;
    border-radius: 5px;
    background: #9f9f9f;
}

.vscroll .thumb {
    width: 9px;
    height: 86px;
}

.arrow {
    border: 4px solid transparent;
}

.arrow.up {
    margin: 2px 0 6px;
    border-bottom: 6px solid #9f9f9f;
}

.arrow.down {
    margin: auto 0 2px;
    border-top: 6px solid #9f9f9f;
}

.arrow.left {
    margin-left: 2px;
    border-right: 6px solid #9f9f9f;
}

.arrow.right {
    border-left: 6px solid #9f9f9f;
}

.count {
    position: absolute;
    right: 27px;
    bottom: 12px;
    padding: 0 14px 0 6px;
    border-radius: 2px;
    background: #dadada;
    box-shadow: 0 1px 3px rgba(0, 0, 0, .3);
    font-size: 13px;
    line-height: 25px;
    color: #666;
}

.hscroll {
    flex: none;
    display: flex;
    align-items: center;
    height: 15px;
    margin-left: 98px;
    padding-right: 18px;
    background: #fff;
}

.track {
    flex: 1;
    display: grid;
    grid-template-columns: 304fr 350fr 346fr;
}

.hscroll .thumb {
    grid-column: 2;
    height: 9px;
}

.rail {
    flex: none;
    display: flex;
    flex-direction: column;
    align-items: center;
    gap: 29px;
    width: 58px;
    padding-top: 15px;
    border-left: 1px solid var(--line);
}

.rail svg {
    fill: none;
    stroke: #3c3c3c;
    stroke-width: 1.5;
}

/* ---------- column dialog ---------- */
.column-dialog {
    position: absolute;
    z-index: 2;
    top: calc(100% + 2px);
    left: -2px;
    width: 385px;
    padding: 11px;
    border-radius: 0 0 8px 8px;
    background: #fff;
    box-shadow: 0 2px 10px rgba(0, 0, 0, .3);
    clip-path: inset(0 -20px -20px);
    font-size: 14px;
    font-weight: 400;
    color: #555;
}

.column-dialog label {
    display: block;
    margin-bottom: 4px;
}

.column-dialog input {
    display: block;
    width: 100%;
    height: 44px;
    margin-bottom: 18px;
    padding: 0 11px;
    border: 2px solid var(--accent);
    border-radius: 4px;
    outline: 0;
    font-weight: 500;
}

.column-dialog input::selection {
    background: #4f5fd0;
    color: #fff;
}

.type-field {
    display: flex;
    align-items: center;
    height: 44px;
    padding: 0 21px 0 14px;
    border: 2px solid #dcdcdc;
    border-radius: 4px;
    color: #111;
}

.type-icon {
    font-size: 11px;
    font-weight: 600;
    color: #444;
}

.type-field select {
    flex: 1;
    height: 40px;
    padding: 0 12px;
    border: 0;
    appearance: none;
    background: none;
    color: #555;
}

.actions {
    display: flex;
    justify-content: flex-end;
    gap: 13px;
    margin-top: 35px;
}

.actions button {
    width: 106px;
    height: 44px;
    border-radius: 4px;
    background: #eee;
    color: #444;
    font-size: 15px;
    font-weight: 600;
}

.actions .ok {
    background: #3f72b5;
    color: #fff;
    font-weight: 700;
}

/* ---------- taskbar ---------- */
.taskbar {
    flex: none;
    display: grid;
    grid-template-columns: 1fr auto 1fr;
    align-items: center;
    height: 47px;
    padding-bottom: 2px;
    background: #1c1c1c;
    color: #fff;
    font: 12px/16px var(--os-font);
}

.weather {
    display: flex;
    align-items: center;
    gap: 3px;
    padding-left: 17px;
}

.muted {
    color: #b5b5b5;
}

.task-icons {
    display: flex;
    align-items: center;
    padding-left: 2px;
}

.task-icons button {
    width: 44px;
    height: 40px;
    position: relative;
}

.task-search {
    display: flex;
    align-items: center;
    gap: 10px;
    width: 220px;
    height: 32px;
    margin: 0 2px;
    padding: 0 16px 0 11px;
    border: 1px solid #4c4c4c;
    border-radius: 16px;
    background: #3a3a3a;
}

.task-search input {
    flex: 1;
    min-width: 0;
    padding: 0;
    border: 0;
    background: none;
    font-size: 13px;
}

.task-search input::placeholder {
    color: #ccc;
}

.open::after {
    content: "";
    position: absolute;
    bottom: 1px;
    width: 6px;
    height: 3px;
    border-radius: 2px;
    background: #999;
}

.task-icons .current {
    border: 1px solid #333;
    border-radius: 4px;
    background: #2b2b2b;
}

.current::after {
    bottom: 0;
    width: 16px;
    background: #4cc2ff;
}

.tray {
    display: flex;
    justify-content: flex-end;
    align-items: center;
    gap: 8px;
    padding-right: 17px;
    text-align: right;
}
```
FILE: grid.js
```js
const gridBody = document.getElementById('gridBody');
const columnDialog = document.getElementById('columnDialog');
const columnName = document.getElementById('columnName');

const ROW_COUNT = 27;
const steps = ['Conduit', 'Pulling cables', 'Terminations'];
const mastless = 'A2 (1) Mastless lift drive control Drv 1';

// column order: task, xibNames, xib, mibNames, mib, aibNames, aib
const rows = Array.from({ length: ROW_COUNT + 1 }, () => ['', '', '', '', '', '', '']);

// the work steps of an item, one row each
function addSteps(first, col, texts) {
    texts.forEach((text, i) => {
        if (first + i <= ROW_COUNT) {
            rows[first + i][col] = text;
        }
    });
}

// task column: only the part right of the frozen edge
[
    [1, 'rging (ACDP)', ' Bot charging (ACDP)', 'es D1 Bot charging (ACDP)', 's D1 Bot charging (ACDP)'],
    [5, 'rging (ACDP)', ' Bot charging (ACDP)', 'es D2 Bot charging (ACDP)', 's D2 Bot charging (ACDP)'],
    [9, 'rging (ACDP)', ' Bot charging (ACDP)', 'es D3 Bot charging (ACDP)', 's D3 Bot charging (ACDP)'],
    [13, 'rging (ACDP)', ' Bot charging (ACDP)', 'es D4 Bot charging (ACDP)', 's D4 Bot charging (ACDP)'],
    [17, 'onitor', ' DRV monitor', 'es C1 DRV monitor', 's C1 DRV monitor'],
    [21, 'onitor', ' DRV monitor', 'es C2 DRV monitor', 's C2 DRV monitor'],
    [25, 's lift drive control Drv 1', '(1) Mastless lift drive control Drv 1', 'es A2 (1) Mastless lift drive control Drv 1']
].forEach(([first, ...texts]) => addSteps(first, 0, texts));

// XIB
[
    [1, 'D1 Bot charging (ACDP) Drv 1', ['Conduit D1 Bot chargin', 'Pulling cables D1 Bot c', 'Terminations D1 Bot ch']],
    [5, 'D2 Bot charging (ACDP) Drv 1', ['Conduit D2 Bot chargin', 'Pulling cables D2 Bot c', 'Terminations D2 Bot ch']],
    [9, 'D3 Bot charging (ACDP) Drv 2', ['Conduit D3 Bot chargin', 'Pulling cables D3 Bot c', 'Terminations D3 Bot ch']],
    [13, 'D4 Bot charging (ACDP) Drv 2', ['Conduit D4 Bot chargin', 'Pulling cables D4 Bot c', 'Terminations D4 Bot ch']],
    [17, 'C1 DRV monitor Drv 1', ['Conduit C1 DRV monito', 'Pulling cables C1 DRV', 'Terminations C1 DRV m']],
    [21, 'C1 DRV monitor Drv 2', ['Conduit C1 DRV monito', 'Pulling cables C1 DRV', 'Terminations C1 DRV m']],
    [25, mastless, ['Conduit A2 (1) Mastless', 'Pulling cables A2 (1) M']]
].forEach(([first, name, texts]) => {
    rows[first][1] = name;
    addSteps(first + 1, 2, texts);
});

// MIB
rows[1][3] = 'MIB LH H Mint. Areas, L';
rows[5][3] = 'MIB LH R1 Inbound cel';
rows[9][3] = 'MIB LH P Adapter cell n';
rows[13][3] = 'MIB LH V1 Inbound sta';
rows[17][3] = 'MIB LH V2 Inbound sta';
addSteps(10, 4, steps.map((step) => step + ' P Adapter cell newtork PLC (UPS)'));
addSteps(14, 4, steps.map((step) => step + ' V1 Inbound standard power'));
addSteps(18, 4, steps.map((step) => step + ' V2 Inbound standard power'));

// AIB
[
    ['H Mint. Areas, Laptops,Accessories', 'H M'],
    ['D1 Bot charging (ACDP)', 'D1'],
    ['D2 Bot charging (ACDP)', 'D2'],
    ['C1 DRV monitor', 'C1'],
    [mastless, 'A2 ('],
    ['B1 Product lift controls (UPS) Drv 1', 'B1'],
    ['V1 Inbound standard power', 'V1']
].forEach(([name, short], i) => {
    const first = 2 + i * 4;
    rows[first][5] = name;
    addSteps(first + 1, 6, ['Conduit ' + short, 'Pulling cable', 'Terminations']);
});

for (let n = 1; n <= ROW_COUNT; n++) {
    const tr = gridBody.insertRow();
    const num = tr.insertCell();
    num.className = 'num';
    num.textContent = n;

    rows[n].forEach((text, col) => {
        const td = tr.insertCell();
        if (col === 0) td.className = 'task';
        if (col === 4) td.className = 'picked';
        const span = document.createElement('span');
        span.textContent = text;
        td.appendChild(span);
    });
}

columnDialog.addEventListener('submit', (event) => event.preventDefault());

columnName.focus();
columnName.select();
```
